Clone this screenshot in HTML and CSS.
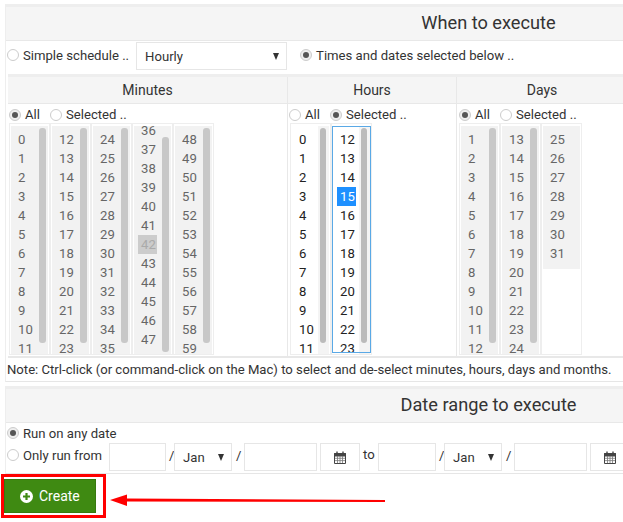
FILE: index.html
```html
<!DOCTYPE html>
<html lang="en">
<head>
    <meta charset="UTF-8">
    <title>When to execute</title>
    <link rel="stylesheet" href="styles.css">
</head>
<body>
    <div class="page">
        <div class="panel">
            <h2 class="panel-title">When to execute</h2>
            <div class="mode-row">
                <label class="opt"><span class="radio"></span>Simple schedule ..</label>
                <div class="select select-hourly">Hourly<span class="caret"></span></div>
                <label class="opt"><span class="radio on"></span>Times and dates selected below ..</label>
            </div>
            <div class="pickers">
                <div class="col col-minutes">
                    <div class="col-title">Minutes</div>
                    <div class="choice-row">
                        <label class="opt"><span class="radio on"></span>All</label>
                        <label class="opt"><span class="radio"></span>Selected ..</label>
                    </div>
                    <div class="lists">
                        <div class="list off"><div class="nums"><span>0</span><span>1</span><span>2</span><span>3</span><span>4</span><span>5</span><span>6</span><span>7</span><span>8</span><span>9</span><span>10</span><span>11</span></div><div class="track"><div class="thumb"></div></div></div>
                        <div class="list off"><div class="nums"><span>12</span><span>13</span><span>14</span><span>15</span><span>16</span><span>17</span><span>18</span><span>19</span><span>20</span><span>21</span><span>22</span><span>23</span></div><div class="track"><div class="thumb"></div></div></div>
                        <div class="list off"><div class="nums"><span>24</span><span>25</span><span>26</span><span>27</span><span>28</span><span>29</span><span>30</span><span>31</span><span>32</span><span>33</span><span>34</span><span>35</span></div><div class="track"><div class="thumb"></div></div></div>
                        <div class="list off scrolled"><div class="nums"><span>36</span><span>37</span><span>38</span><span>39</span><span>40</span><span>41</span><span class="picked-off">42</span><span>43</span><span>44</span><span>45</span><span>46</span><span>47</span></div><div class="track"><div class="thumb"></div></div></div>
                        <div class="list off"><div class="nums"><span>48</span><span>49</span><span>50</span><span>51</span><span>52</span><span>53</span><span>54</span><span>55</span><span>56</span><span>57</span><span>58</span><span>59</span></div><div class="track"><div class="thumb"></div></div></div>
                    </div>
                </div>
                <div class="col col-hours">
                    <div class="col-title">Hours</div>
                    <div class="choice-row">
                        <label class="opt"><span class="radio"></span>All</label>
                        <label class="opt"><span class="radio on"></span>Selected ..</label>
                    </div>
                    <div class="lists">
                        <div class="list"><div class="nums"><span>0</span><span>1</span><span>2</span><span>3</span><span>4</span><span>5</span><span>6</span><span>7</span><span>8</span><span>9</span><span>10</span><span>11</span></div><div class="track"><div class="thumb"></div></div></div>
                        <div class="list focus"><div class="nums"><span>12</span><span>13</span><span>14</span><span class="picked">15</span><span>16</span><span>17</span><span>18</span><span>19</span><span>20</span><span>21</span><span>22</span><span>23</span></div><div class="track"><div class="thumb"></div></div></div>
                    </div>
                </div>
                <div class="col col-days">
                    <div class="col-title">Days</div>
                    <div class="choice-row">
                        <label class="opt"><span class="radio on"></span>All</label>
                        <label class="opt"><span class="radio"></span>Selected ..</label>
                    </div>
                    <div class="lists">
                        <div class="list off"><div class="nums"><span>1</span><span>2</span><span>3</span><span>4</span><span>5</span><span>6</span><span>7</span><span>8</span><span>9</span><span>10</span><span>11</span><span>12</span></div><div class="track"><div class="thumb"></div></div></div>
                        <div class="list off"><div class="nums"><span>13</span><span>14</span><span>15</span><span>16</span><span>17</span><span>18</span><span>19</span><span>20</span><span>21</span><span>22</span><span>23</span><span>24</span></div><div class="track"><div class="thumb"></div></div></div>
                        <div class="list off short"><div class="nums"><span>25</span><span>26</span><span>27</span><span>28</span><span>29</span><span>30</span><span>31</span></div></div>
                    </div>
                </div>
            </div>
            <div class="note">Note: Ctrl-click (or command-click on the Mac) to select and de-select minutes, hours, days and months.</div>
        </div>

        <div class="panel panel-dates">
            <h2 class="panel-title">Date range to execute</h2>
            <div class="date-rows">
                <label class="opt"><span class="radio on"></span>Run on any date</label>
                <div class="date-row">
                    <label class="opt"><span class="radio"></span>Only run from</label>
                    <div class="field w-day"></div>
                    <span class="slash slash-a">/</span>
                    <div class="select select-month">Jan<span class="caret"></span></div>
                    <span class="slash slash-b">/</span>
                    <div class="field w-year"></div>
                    <div class="field cal-btn">
                        <svg width="12" height="13" viewBox="0 0 12 13"><path d="M0.5 2.5h11v10h-11z" fill="#fff" stroke="#444"/><path d="M0.5 2.5h11v2.5h-11z" fill="#444" stroke="#444"/><path d="M3 0.5v2.5M9 0.5v2.5" stroke="#444" stroke-width="1.4"/><path d="M3.5 5v7M6 5v7M8.5 5v7M1 7.3h10M1 9.6h10" stroke="#777" stroke-width="0.8"/></svg>
                    </div>
                    <span class="to">to</span>
                    <div class="field w-day-wide"></div>
                    <span class="slash slash-a">/</span>
                    <div class="select select-month">Jan<span class="caret"></span></div>
                    <span class="slash slash-b">/</span>
                    <div class="field w-year"></div>
                    <div class="field cal-btn">
                        <svg width="12" height="13" viewBox="0 0 12 13"><path d="M0.5 2.5h11v10h-11z" fill="#fff" stroke="#444"/><path d="M0.5 2.5h11v2.5h-11z" fill="#444" stroke="#444"/><path d="M3 0.5v2.5M9 0.5v2.5" stroke="#444" stroke-width="1.4"/><path d="M3.5 5v7M6 5v7M8.5 5v7M1 7.3h10M1 9.6h10" stroke="#777" stroke-width="0.8"/></svg>
                    </div>
                </div>
            </div>
        </div>

        <button class="btn-create">
            <svg width="13" height="13" viewBox="0 0 13 13"><circle cx="6.5" cy="6.5" r="6.5" fill="#fff"/><path d="M6.5 3v7M3 6.5h7" stroke="#3f8a12" stroke-width="2.2"/></svg>
            Create
        </button>
    </div>

    <!-- red markup drawn on top of the screenshot -->
    <div class="callout-box"></div>
    <svg class="callout-arrow" width="290" height="20" viewBox="0 0 290 20">
        <path d="M1 9L18 3.500V7.500L276 9L276 11L18 10.500V15z" fill="#f00"/>
    </svg>
</body>
</html>
```

FILE: styles.css
```css
html, body {
    height: 100%;
    overflow: hidden;
}
body {
    margin: 0;
    font-family: Roboto, sans-serif;
    font-size: 13.13px;
    color: #333;
    background: #fff;
}
.page {
    width: 966px;
    margin-left: 5px;
    padding-top: 4px;
}
.panel {
    border-left: 1px solid #eee;
    border-bottom: 1px solid #e6e6e6;
}
.panel-title {
    margin: 0;
    height: 33px;
    line-height: 32px;
    border-top: 3px solid #eee;
    border-bottom: 1px solid #e8e8e8;
    background: #f5f5f5;
    font-size: 18.2px;
    font-weight: 400;
    text-align: center;
}
.opt {
    display: inline-flex;
    align-items: center;
    white-space: nowrap;
}
.radio {
    box-sizing: border-box;
    display: flex;
    align-items: center;
    justify-content: center;
    width: 12px;
    height: 12px;
    margin-right: 4px;
    border: 1px solid #ccc;
    border-radius: 50%;
    background: #fff;
}
.radio.on {
    background: #eee;
}
.radio.on::after {
    content: "";
    width: 6px;
    height: 6px;
    border-radius: 50%;
    background: #555;
}
.mode-row {
    display: flex;
    align-items: flex-start;
    height: 33px;
    padding-left: 1px;
}
.mode-row .opt {
    height: 28px;
}
.select {
    box-sizing: border-box;
    display: flex;
    align-items: center;
    justify-content: space-between;
    height: 28px;
    border: 1px solid #e6e6e6;
    background: #fff;
    padding: 0 7px 0 8px;
}
.select-hourly {
    width: 151px;
    margin: 1px 13px 0 7px;
}
.select-month {
    width: 58px;
}
.caret {
    width: 0;
    height: 0;
    border-left: 3.5px solid transparent;
    border-right: 3.500px solid transparent;
    border-top: 7px solid #333;
    margin-top: 1px;
}

.pickers {
    display: flex;
    margin-left: 2px;
    border-top: 3px solid #eee;
    border-bottom: 2px solid #e8e8e8;
}
.col {
    flex: none;
    height: 279px;
    border-right: 1px solid #e8e8e8;
}
.col-minutes { width: 279px; }
.col-hours { width: 168px; }
.col-days { width: 170px; }
.col-title {
    height: 26px;
    line-height: 27px;
    background: #f5f5f5;
    border-bottom: 1px solid #e8e8e8;
    font-size: 14px;
    text-align: center;
}
.choice-row {
    box-sizing: border-box;
    display: flex;
    height: 19px;
    align-items: center;
    padding: 2px 0 0 1px;
}
.col-days .choice-row {
    padding-left: 2px;
}
.choice-row .opt:first-child {
    width: 41px;
}
.lists {
    display: flex;
    height: 232px;
    padding-left: 1px;
}
.col-hours .lists, .col-days .lists {
    padding-left: 2px;
}
.list {
    box-sizing: border-box;
    display: flex;
    position: relative;
    width: 41px;
    height: 232px;
    padding: 2px 1px 0;
    border: 1px solid #eee;
    overflow: hidden;
}
.nums {
    flex: 1;
    padding: 4px 0 0 4px;
    overflow: hidden;
}
.nums span {
    display: block;
    width: 19px;
    box-sizing: border-box;
    height: 19px;
    line-height: 20px;
    padding-left: 3px;
    color: #222;
}
.list.off .nums, .list.off .track {
    background: #f2f2f2;
}
.list.off .nums span {
    color: #666;
}
.scrolled .nums {
    padding-top: 0;
}
.scrolled .nums span:first-child {
    margin-top: -5px;
}
.scrolled .thumb {
    margin-top: 9px;
}
.list .picked-off {
    background: #ccc;
    color: #aaa !important;
}
.picked {
    background: #1e90ff;
    color: #fff !important;
}
.track {
    width: 11px;
    flex: none;
    padding: 2px;
    box-sizing: border-box;
    background: #f4f4f4;
}
.thumb {
    width: 7px;
    height: 215px;
    border-radius: 3px;
    background: #bbb;
}
.col-hours .thumb {
    width: 6px;
}
.list.off .thumb {
    background: #c8c8c8;
}
.focus::after {
    content: "";
    position: absolute;
    inset: 2px 0 1px 0;
    border: 1px solid #5aa9e6;
}
.short .nums {
    flex: none;
    width: 100%;
    height: 143px;
    box-sizing: border-box;
}
.note {
    height: 23px;
    line-height: 24px;
    padding-left: 1px;
    white-space: nowrap;
}

.panel-dates {
    margin-top: 4px;
}
.date-rows {
    display: flex;
    flex-direction: column;
    align-items: flex-start;
    height: 50px;
    padding-left: 1px;
}
.date-rows > .opt {
    height: 20px;
}
.date-row {
    display: flex;
    align-items: flex-start;
    height: 28px;
}
.date-row .opt {
    height: 24px;
    margin-right: 7px;
}
.field {
    box-sizing: border-box;
    height: 28px;
    border: 1px solid #e6e6e6;
    background: #fff;
}
.w-day { width: 57px; }
.w-day-wide { width: 58px; }
.w-year { width: 73px; }
.slash {
    box-sizing: border-box;
    line-height: 25px;
}
.slash-a {
    width: 8px;
    padding-left: 3px;
}
.slash-b {
    width: 12px;
    padding-left: 4px;
}
.cal-btn {
    display: flex;
    align-items: center;
    justify-content: center;
    width: 40px;
    margin-left: 3px;
}
.to {
    box-sizing: border-box;
    width: 18px;
    padding-left: 3px;
    line-height: 24px;
}

.btn-create {
    display: flex;
    align-items: center;
    gap: 6px;
    width: 92px;
    height: 34px;
    margin: 5px 0 0 -1px;
    padding: 0 0 0 15px;
    border: 1px solid #37790f;
    background: #3f8a12;
    color: #fff;
    font-family: Roboto, sans-serif;
    font-size: 14px;
}
.callout-box {
    position: absolute;
    left: 1px;
    top: 474px;
    width: 99px;
    height: 38px;
    border: 3px solid #f00;
}
.callout-arrow {
    position: absolute;
    left: 109px;
    top: 491px;
}
```
